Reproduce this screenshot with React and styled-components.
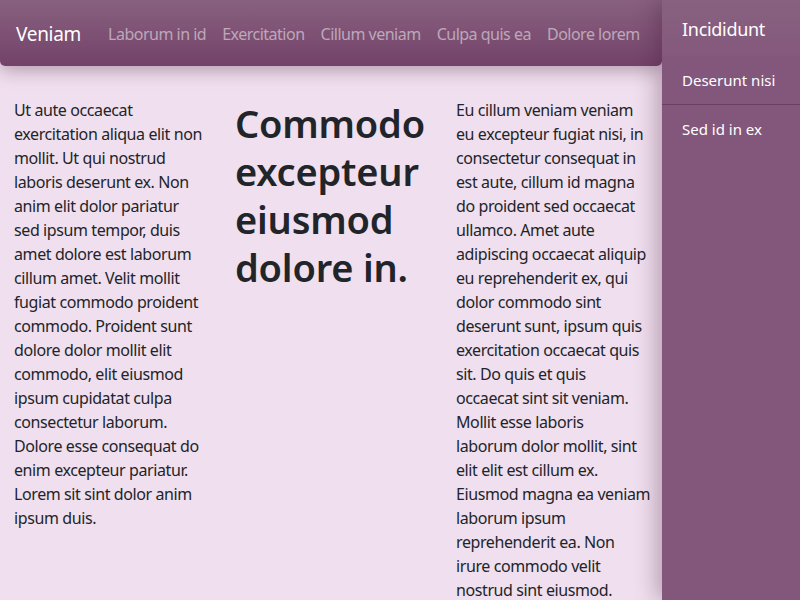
import React from 'react';
import styled, { createGlobalStyle } from 'styled-components';

const GlobalStyle = createGlobalStyle`
  html, body {
    margin: 0;
    height: 100%;
    overflow: hidden;
  }
  body {
    font-family: "Noto Sans", "Open Sans", sans-serif;
    font-size: 16px;
    line-height: 24px;
    color: #212529;
    background: #f0dfee;
  }
  #root {
    height: 100%;
  }
`;

const Layout = styled.div`
  display: flex;
  height: 100%;
`;

const Main = styled.div`
  flex: 1;
  min-width: 0;
  display: flex;
  flex-direction: column;
`;

const Navbar = styled.nav`
  flex-shrink: 0;
  height: 66px;
  box-sizing: border-box;
  padding: 1px 16px 0;
  display: flex;
  align-items: center;
  border-radius: 0 0 5px 5px;
  background: linear-gradient(180deg, #88617f 0%, #73426a 100%);
  box-shadow: 0 4px 18px rgba(60, 20, 50, 0.35);
  position: relative;
  z-index: 1;
`;

const Brand = styled.a`
  font-size: 19px;
  letter-spacing: -0.3px;
  color: #fff;
  margin-right: 19px;
  text-decoration: none;
`;

const NavLink = styled.a`
  padding: 0 8px;
  color: rgba(255, 255, 255, 0.5);
  text-decoration: none;
  white-space: nowrap;
  letter-spacing: -0.5px;
`;

const Content = styled.div`
  display: grid;
  grid-template-columns: repeat(3, minmax(0, 1fr));
  gap: 30px;
  padding: 32px 15px 0 14px;
  letter-spacing: -0.4px;
`;

const Paragraph = styled.p`
  margin: 0;
`;

const Line = styled.span`
  display: block;
  white-space: nowrap;
`;

const Heading = styled.h1`
  margin: 1px 0 0;
  font-size: 38px;
  line-height: 48px;
  font-weight: 600;
  letter-spacing: -0.2px;
`;

const Sidebar = styled.aside`
  width: 138px;
  flex-shrink: 0;
  background: #83577b;
  box-shadow: -6px 0 20px rgba(60, 20, 50, 0.3);
  position: relative;
  z-index: 2;
  color: #fff;
`;

const SidebarTitle = styled.div`
  height: 56px;
  box-sizing: border-box;
  padding: 2px 20px 0;
  display: flex;
  align-items: center;
  font-size: 18px;
  letter-spacing: -0.3px;
  background: linear-gradient(180deg, #87617f 0%, #85597d 100%);
`;

const SidebarItem = styled.a`
  display: block;
  padding: 12px 20px;
  color: #fff;
  text-decoration: none;
  font-size: 15px;
  border-bottom: ${(p) => (p.$divider ? '1px solid #6c3f63' : 'none')};
`;

const left = [
  'Ut aute occaecat',
  'exercitation aliqua elit non',
  'mollit. Ut qui nostrud',
  'laboris deserunt ex. Non',
  'anim elit dolor pariatur',
  'sed ipsum tempor, duis',
  'amet dolore est laborum',
  'cillum amet. Velit mollit',
  'fugiat commodo proident',
  'commodo. Proident sunt',
  'dolore dolor mollit elit',
  'commodo, elit eiusmod',
  'ipsum cupidatat culpa',
  'consectetur laborum.',
  'Dolore esse consequat do',
  'enim excepteur pariatur.',
  'Lorem sit sint dolor anim',
  'ipsum duis.',
];

const right = [
  'Eu cillum veniam veniam',
  'eu excepteur fugiat nisi, in',
  'consectetur consequat in',
  'est aute, cillum id magna',
  'do proident sed occaecat',
  'ullamco. Amet aute',
  'adipiscing occaecat aliquip',
  'eu reprehenderit ex, qui',
  'dolor commodo sint',
  'deserunt sunt, ipsum quis',
  'exercitation occaecat quis',
  'sit. Do quis et quis',
  'occaecat sint sit veniam.',
  'Mollit esse laboris',
  'laborum dolor mollit, sint',
  'elit elit est cillum ex.',
  'Eiusmod magna ea veniam',
  'laborum ipsum',
  'reprehenderit ea. Non',
  'irure commodo velit',
  'nostrud sint eiusmod.',
];

const links = ['Laborum in id', 'Exercitation', 'Cillum veniam', 'Culpa quis ea', 'Dolore lorem'];

const App = () => {
  return (
    <>
      <GlobalStyle />
      <Layout>
        <Main>
          <Navbar>
            <Brand href="#">Veniam</Brand>
            {links.map((l) => (
              <NavLink key={l} href="#">{l}</NavLink>
            ))}
          </Navbar>
          <Content>
            <Paragraph>
              {left.map((l) => (
                <Line key={l}>{l}</Line>
              ))}
            </Paragraph>
            <Heading>Commodo excepteur eiusmod dolore in.</Heading>
            <Paragraph>
              {right.map((l) => (
                <Line key={l}>{l}</Line>
              ))}
            </Paragraph>
          </Content>
        </Main>
        <Sidebar>
          <SidebarTitle>Incididunt</SidebarTitle>
          <SidebarItem href="#" $divider>Deserunt nisi</SidebarItem>
          <SidebarItem href="#">Sed id in ex</SidebarItem>
        </Sidebar>
      </Layout>
    </>
  );
};

export default App;
